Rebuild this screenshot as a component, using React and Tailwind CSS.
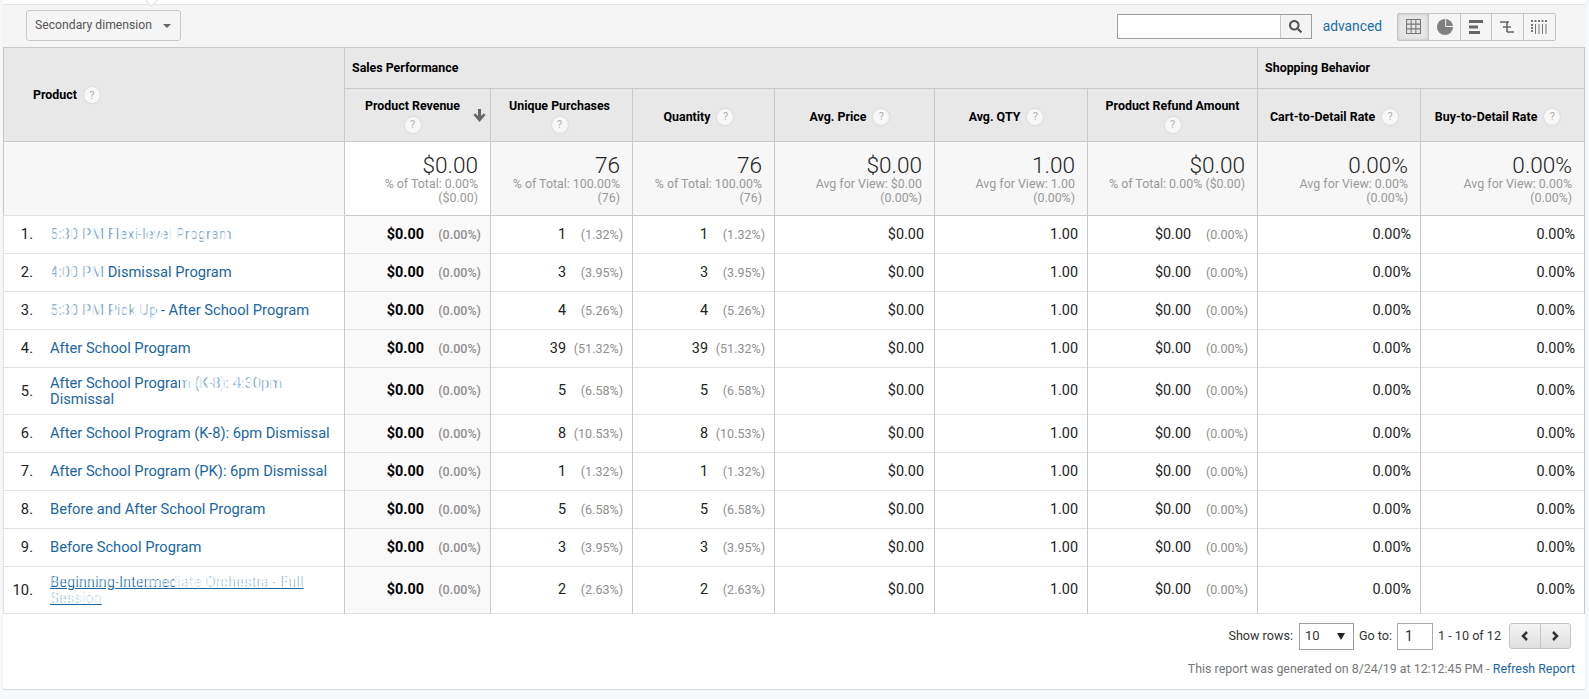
import React from "react";
import { FaSearch } from "react-icons/fa";

const rows = [
  { name: "5:30 PM Flexi-level Program", hide: "w-full", h: "h-[38px]", un: "1", up: "(1.32%)" },
  { name: "4:00 PM Dismissal Program", hide: "w-[55px]", h: "h-[38px]", un: "3", up: "(3.95%)" },
  { name: "5:30 PM Pick Up - After School Program", hide: "w-[106px]", h: "h-[38px]", un: "4", up: "(5.26%)" },
  { name: "After School Program", h: "h-[38px]", un: "39", up: "(51.32%)" },
  { name: "After School Program (K-8): 4:30pm Dismissal", hide2: true, h: "h-[47px]", un: "5", up: "(6.58%)" },
  { name: "After School Program (K-8): 6pm Dismissal", h: "h-[38px]", un: "8", up: "(10.53%)" },
  { name: "After School Program (PK): 6pm Dismissal", h: "h-[38px]", un: "1", up: "(1.32%)" },
  { name: "Before and After School Program", h: "h-[38px]", un: "5", up: "(6.58%)" },
  { name: "Before School Program", h: "h-[38px]", un: "3", up: "(3.95%)" },
  { name: "Beginning-Intermediate Orchestra - Full Session", under: true, h: "h-[47px]", un: "2", up: "(2.63%)" },
];

const Help = () => (
  <span className="inline-flex h-[16px] w-[16px] items-center justify-center rounded-full bg-[#f8f8f8] text-[11px] font-normal leading-none text-[#b0b0b0] shadow-[0_0_2px_#c4c4c4] align-middle">
    ?
  </span>
);

const Speck = ({ className }) => (
  <span className={`absolute left-0 top-0 h-[16px] bg-[repeating-linear-gradient(90deg,#ffffffe6_0px,#ffffffe6_2px,#ffffff70_3px,#ffffff70_5px,#ffffffd0_7px)] ${className}`} />
);

const Pair = ({ value, pct, strong, pr = "pr-[9px]" }) => (
  <div className={`flex items-center justify-end ${pr}`}>
    <span className={strong ? "font-bold text-black" : "text-[#222]"}>{value}</span>
    <span className={`w-[57px] pt-[1px] text-right text-[12.5px] text-[#8f8f8f] ${strong ? "font-medium" : ""}`}>{pct}</span>
  </div>
);

const HeadCell = ({ title, stack, w = "pl-2 pr-[18px]", sort }) => (
  <th className={`relative border border-[#c9c9c9] bg-[#e8e8e8] text-center align-middle text-[12.4px] font-bold text-black ${w}`}>
    {stack ? (
      <div className="flex flex-col items-center gap-[1px]">
        <span>{title}</span>
        <Help />
      </div>
    ) : (
      <span className="inline-flex items-center gap-[7px] pt-[4px]">
        {title} <Help />
      </span>
    )}
    {sort && (
      <svg viewBox="0 0 12 12" className="absolute right-[4px] top-[20px] h-[13px] w-[13px] fill-[#666]">
        <path d="M4.600 0h2.800v6.400L10 4l1.500 1.500L6 12 .5 5.500 2 4l2.600 2.400z" />
      </svg>
    )}
  </th>
);

const Summary = ({ big, lines, white }) => (
  <td className={`border border-[#c9c9c9] pr-[12px] pt-[12px] text-right align-top ${white ? "bg-white" : "bg-[#f7f7f7]"}`}>
    <div className="text-[22.600px] font-light leading-[23px] text-[#222]">{big}</div>
    {lines.map((l) => (
      <div key={l} className="text-[12.4px] leading-[14px] text-[#999]">{l}</div>
    ))}
  </td>
);

const ViewBtn = ({ children, active }) => (
  <div className={`flex h-full w-[32px] items-center justify-center border-r border-[#c4c4c4] last:border-r-0 ${active ? "bg-[#e6e6e6] shadow-[inset_0_0_3px_#bbb]" : "bg-[#f5f5f5]"}`}>
    {children}
  </div>
);

export default function App() {
  return (
    <div className="h-[699px] w-[1589px] overflow-hidden bg-[#f7f8fa] pl-[3px] font-[Roboto,sans-serif] text-[14.4px] text-[#222]">
      <div className="h-[689px] w-[1582px] rounded-b-[2px] bg-white shadow-[0_1px_1px_#d5d5d5]">
        {/* top strip */}
        <div className="relative h-[5px] border-b border-[#e4e4e4] bg-white">
          <span className="absolute left-[144px] top-[-4px] h-[9px] w-[9px] rotate-45 border-b border-r border-[#e0e0e0] bg-white" />
        </div>

        {/* toolbar */}
        <div className="flex h-[42px] items-start justify-between bg-[#f5f5f5] pl-[23px] pr-[29px]">
          <button className="mt-[5px] flex h-[31px] w-[155px] items-center justify-between rounded-[3px] border border-[#c8c8c8] bg-[#f5f5f5] pl-[8px] pr-[9px] text-[12.2px] text-[#555]">
            Secondary dimension
            <span className="h-0 w-0 border-x-[4px] border-t-[4px] border-x-transparent border-t-[#666]" />
          </button>
          <div className="mt-[7px] flex h-[29px] items-center">
            <div className="flex h-[25px] w-[195px] border border-[#9e9e9e] bg-white">
              <div className="flex-1" />
              <div className="flex w-[31px] items-center justify-center border-l border-[#c8c8c8] bg-[#f3f3f3]">
                <FaSearch className="h-[13px] w-[13px] text-[#555]" />
              </div>
            </div>
            <a className="ml-[11px] text-[13.8px] text-[#1a6ea8]">advanced</a>
            <div className="ml-[15px] flex h-[28px] w-[159px] rounded-[2px] border border-[#c4c4c4]">
              <ViewBtn active>
                <svg viewBox="0 0 14 14" className="h-[15px] w-[15px] fill-none stroke-[#777]">
                  <path d="M.5.5h13v13H.5zM.5 4.800h13M.5 9.200h13M4.800.5v13M9.200.5v13" />
                </svg>
              </ViewBtn>
              <ViewBtn>
                <svg viewBox="0 0 16 16" className="h-[16px] w-[16px]">
                  <circle cx="8" cy="8" r="8" fill="#808080" />
                  <path d="M8.700 0v7.500H16" fill="none" stroke="#f5f5f5" strokeWidth="1" />
                </svg>
              </ViewBtn>
              <ViewBtn>
                <svg viewBox="0 0 14 14" className="h-[14px] w-[14px] fill-[#666]">
                  <path d="M0 0h14v3H0zM0 5.500h9v3H0zM0 11h11v3H0z" />
                </svg>
              </ViewBtn>
              <ViewBtn>
                <svg viewBox="0 0 14 14" className="h-[14px] w-[14px] fill-none stroke-[#666] stroke-[1.6]">
                  <path d="M0 2h9M7 2v10M3 7h4M7 12h7M7 7h4" />
                </svg>
              </ViewBtn>
              <ViewBtn>
                <svg viewBox="0 0 16 14" className="h-[14px] w-[16px] fill-[#777]">
                  <path d="M0 0h2v2H0zM3.500 0h2v2h-2zM7 0h2v2H7zM10.500 0h2v2h-2zM14 0h2v2h-2zM0 4h2v2H0zM0 7h2v2H0zM0 10h2v2H0zM4 4h1v10H4zM7.500 4h1v10h-1zM11 4h1v10h-1zM14.500 4h1v10h-1z" />
                </svg>
              </ViewBtn>
            </div>
          </div>
        </div>

        {/* report table */}
        <table className="w-[1581px] table-fixed border-collapse">
          <colgroup>
            <col className="w-[341px]" />
            <col className="w-[146px]" />
            <col className="w-[142px]" />
            <col className="w-[142px]" />
            <col className="w-[160px]" />
            <col className="w-[153px]" />
            <col className="w-[170px]" />
            <col className="w-[163px]" />
            <col className="w-[164px]" />
          </colgroup>
          <thead>
            <tr className="h-[41px]">
              <th rowSpan={2} className="border border-[#c9c9c9] bg-[#e8e8e8] pl-[29px] pt-[2px] text-left text-[12.4px] font-bold text-black">
                <span className="inline-flex items-center gap-[7px]">Product <Help /></span>
              </th>
              <th colSpan={6} className="border border-[#c9c9c9] bg-[#e8e8e8] pl-[7px] text-left text-[12.4px] font-bold text-black">Sales Performance</th>
              <th colSpan={2} className="border border-[#c9c9c9] bg-[#e8e8e8] pl-[7px] text-left text-[12.4px] font-bold text-black">Shopping Behavior</th>
            </tr>
            <tr className="h-[53px]">
              <HeadCell title="Product Revenue" stack sort />
              <HeadCell title="Unique Purchases" stack w="pl-2 pr-[12px]" />
              <HeadCell title="Quantity" />
              <HeadCell title="Avg. Price" />
              <HeadCell title="Avg. QTY" />
              <HeadCell title="Product Refund Amount" stack w="px-2" />
              <HeadCell title="Cart-to-Detail Rate" />
              <HeadCell title="Buy-to-Detail Rate" />
            </tr>
          </thead>
          <tbody>
            <tr className="h-[74px]">
              <td className="border border-[#c9c9c9] border-b-[#e2e2e2] bg-[#f7f7f7]" />
              <Summary white big="$0.00" lines={["% of Total: 0.00%", "($0.00)"]} />
              <Summary big="76" lines={["% of Total: 100.00%", "(76)"]} />
              <Summary big="76" lines={["% of Total: 100.00%", "(76)"]} />
              <Summary big="$0.00" lines={["Avg for View: $0.00", "(0.00%)"]} />
              <Summary big="1.00" lines={["Avg for View: 1.00", "(0.00%)"]} />
              <Summary big="$0.00" lines={["% of Total: 0.00% ($0.00)"]} />
              <Summary big="0.00%" lines={["Avg for View: 0.00%", "(0.00%)"]} />
              <Summary big="0.00%" lines={["Avg for View: 0.00%", "(0.00%)"]} />
            </tr>
            {rows.map((r, i) => (
              <tr key={r.name} className={`${r.h} border-b border-[#e2e2e2]`}>
                <td className="border-l border-[#e2e2e2] pr-[10px]">
                  <div className="flex items-center text-[14.7px]">
                    <span className="w-[29px] shrink-0 text-right">{i + 1}.</span>
                    <a className={`relative ml-[17px] block leading-[16px] text-[#1a66a3] ${r.under ? "underline" : ""}`}>
                      {r.name}
                      {r.hide && <Speck className={r.hide} />}
                      {r.hide2 && <Speck className="!left-[130px] w-[160px]" />}
                      {r.under && (
                        <>
                          <span className="absolute left-0 top-0 h-[12px] w-[125px] bg-[repeating-linear-gradient(90deg,#ffffffa0_0px,#ffffffa0_2px,#ffffff00_4px)]" />
                          <span className="absolute left-[125px] top-0 h-[13px] w-[130px] bg-[repeating-linear-gradient(90deg,#ffffffe6_0px,#ffffffe6_2px,#ffffff80_4px)]" />
                          <span className="absolute left-0 top-[16px] h-[13px] w-[55px] bg-[repeating-linear-gradient(90deg,#ffffffe6_0px,#ffffffe6_2px,#ffffff80_4px)]" />
                        </>
                      )}
                    </a>
                  </div>
                </td>
                <td className="border-x border-[#c9c9c9] bg-[#f9f9f9]"><Pair strong value="$0.00" pct="(0.00%)" /></td>
                <td className="border-r border-[#c9c9c9]"><Pair value={r.un} pct={r.up} /></td>
                <td className="border-r border-[#c9c9c9]"><Pair value={r.un} pct={r.up} /></td>
                <td className="border-r border-[#c9c9c9] pr-[10px] text-right">$0.00</td>
                <td className="border-r border-[#c9c9c9] pr-[9px] text-right">1.00</td>
                <td className="border-r border-[#c9c9c9]"><Pair value="$0.00" pct="(0.00%)" /></td>
                <td className="border-r border-[#c9c9c9] pr-[9px] text-right">0.00%</td>
                <td className="border-r border-[#c9c9c9] pr-[9px] text-right">0.00%</td>
              </tr>
            ))}
          </tbody>
        </table>

        {/* pager */}
        <div className="flex flex-col items-end pr-[10px] pt-[8px] text-[12.6px] text-[#333]">
          <div className="mr-[4px] flex h-[28px] items-center">
            <span>Show rows:</span>
            <div className="ml-[6px] flex h-[27px] w-[55px] items-center justify-between border border-[#9e9e9e] bg-white pl-[5px] pr-[8px] text-[13px]">
              10
              <span className="h-0 w-0 border-x-[4px] border-t-[7px] border-x-transparent border-t-[#222]" />
            </div>
            <span className="ml-[5px]">Go to:</span>
            <div className="ml-[5px] flex h-[27px] w-[36px] items-center border border-[#aaa] bg-white pl-[7px] text-[14px]">1</div>
            <span className="ml-[5px]">1 - 10 of 12</span>
            <div className="ml-[8px] flex h-[26px] w-[62px] rounded-[3px] border border-[#c4c4c4] bg-[linear-gradient(#f5f5f5,#e0e0e0)] text-[#333]">
              <span className="flex flex-1 items-center justify-center border-r border-[#c4c4c4]">
                <svg viewBox="0 0 8 10" className="h-[10px] w-[8px] fill-none stroke-[#333] stroke-[2.5]"><path d="M6 1 2 5l4 4" /></svg>
              </span>
              <span className="flex flex-1 items-center justify-center">
                <svg viewBox="0 0 8 10" className="h-[10px] w-[8px] fill-none stroke-[#333] stroke-[2.5]"><path d="m2 1 4 4-4 4" /></svg>
              </span>
            </div>
          </div>
          <div className="mt-[10px] text-[12.4px] text-[#777]">
            This report was generated on 8/24/19 at 12:12:45 PM - <a className="text-[#1a66a3]">Refresh Report</a>
          </div>
        </div>
      </div>
    </div>
  );
}
